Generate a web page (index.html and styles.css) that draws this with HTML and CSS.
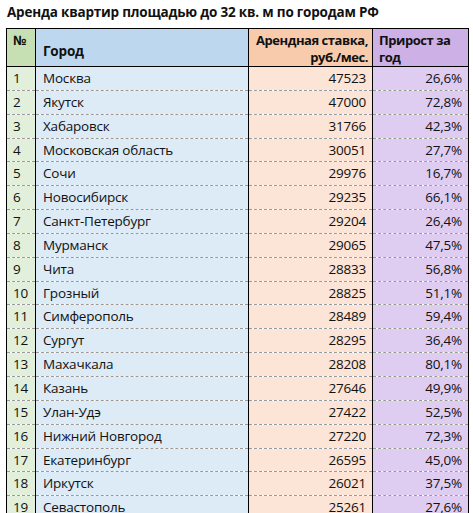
FILE: index.html
```html
<!DOCTYPE html>
<html lang="ru">
<head>
<meta charset="utf-8">
<link rel="stylesheet" href="styles.css">
</head>
<body>
<h1 class="title">Аренда квартир площадью до 32 кв. м по городам РФ</h1>
<table class="rent">
<thead>
<tr>
<th class="c-num">№</th>
<th class="c-city">Город</th>
<th class="c-rent">Арендная ставка,<br>руб./мес.</th>
<th class="c-grow">Прирост за<br>год</th>
</tr>
</thead>
<tbody>
<tr><td class="c-num">1</td><td class="c-city">Москва</td><td class="c-rent">47523</td><td class="c-grow">26,6%</td></tr>
<tr><td class="c-num">2</td><td class="c-city">Якутск</td><td class="c-rent">47000</td><td class="c-grow">72,8%</td></tr>
<tr><td class="c-num">3</td><td class="c-city">Хабаровск</td><td class="c-rent">31766</td><td class="c-grow">42,3%</td></tr>
<tr><td class="c-num">4</td><td class="c-city">Московская область</td><td class="c-rent">30051</td><td class="c-grow">27,7%</td></tr>
<tr><td class="c-num">5</td><td class="c-city">Сочи</td><td class="c-rent">29976</td><td class="c-grow">16,7%</td></tr>
<tr><td class="c-num">6</td><td class="c-city">Новосибирск</td><td class="c-rent">29235</td><td class="c-grow">66,1%</td></tr>
<tr><td class="c-num">7</td><td class="c-city">Санкт-Петербург</td><td class="c-rent">29204</td><td class="c-grow">26,4%</td></tr>
<tr><td class="c-num">8</td><td class="c-city">Мурманск</td><td class="c-rent">29065</td><td class="c-grow">47,5%</td></tr>
<tr><td class="c-num">9</td><td class="c-city">Чита</td><td class="c-rent">28833</td><td class="c-grow">56,8%</td></tr>
<tr><td class="c-num">10</td><td class="c-city">Грозный</td><td class="c-rent">28825</td><td class="c-grow">51,1%</td></tr>
<tr><td class="c-num">11</td><td class="c-city">Симферополь</td><td class="c-rent">28489</td><td class="c-grow">59,4%</td></tr>
<tr><td class="c-num">12</td><td class="c-city">Сургут</td><td class="c-rent">28295</td><td class="c-grow">36,4%</td></tr>
<tr><td class="c-num">13</td><td class="c-city">Махачкала</td><td class="c-rent">28208</td><td class="c-grow">80,1%</td></tr>
<tr><td class="c-num">14</td><td class="c-city">Казань</td><td class="c-rent">27646</td><td class="c-grow">49,9%</td></tr>
<tr><td class="c-num">15</td><td class="c-city">Улан-Удэ</td><td class="c-rent">27422</td><td class="c-grow">52,5%</td></tr>
<tr><td class="c-num">16</td><td class="c-city">Нижний Новгород</td><td class="c-rent">27220</td><td class="c-grow">72,3%</td></tr>
<tr><td class="c-num">17</td><td class="c-city">Екатеринбург</td><td class="c-rent">26595</td><td class="c-grow">45,0%</td></tr>
<tr><td class="c-num">18</td><td class="c-city">Иркутск</td><td class="c-rent">26021</td><td class="c-grow">37,5%</td></tr>
<tr><td class="c-num">19</td><td class="c-city">Севастополь</td><td class="c-rent">25261</td><td class="c-grow">27,6%</td></tr>
</tbody>
</table>
</body>
</html>
```
FILE: styles.css
```css
html, body {
  margin: 0;
  padding: 0;
  background: #ffffff;
  overflow: hidden;
}
body {
  font-family: "Open Sans", "Noto Sans", sans-serif;
  color: #111111;
}
.title {
  margin: 0;
  padding: 3px 0 0 7px;
  height: 28px;
  box-sizing: border-box;
  font-size: 13.5px;
  font-weight: 700;
  line-height: 18px;
  letter-spacing: -0.2px;
}
.rent {
  margin-left: 6px;
  border-collapse: collapse;
  table-layout: fixed;
  width: 462px;
  font-size: 13.5px;
  letter-spacing: -0.2px;
}
.rent th, .rent td {
  border-left: 1px solid #000;
  border-right: 1px solid #000;
  padding: 0 6px;
  white-space: nowrap;
  overflow: hidden;
}
.rent th {
  height: 35px;
  border-top: 1px solid #000;
  border-bottom: 1px solid #000;
  font-weight: 700;
  font-size: 13px;
  letter-spacing: -0.45px;
  line-height: 17px;
  vertical-align: top;
  padding-top: 3px;
  box-sizing: border-box;
  text-align: left;
}
.rent td {
  height: 23.85px;
  box-sizing: border-box;
  border-top: 1px dashed #9a9a9a;
  line-height: 18px;
  padding-top: 2px;
  vertical-align: top;
}
.rent tbody tr:first-child td { border-top: none; }
.rent .c-num { width: 29px; }
.rent .c-city { width: 213px; padding-left: 7px; }
.rent .c-rent { width: 124px; text-align: right; }
.rent .c-grow { width: 96px; text-align: right; }
.rent th.c-city { vertical-align: bottom; padding-bottom: 6px; font-size: 13.5px; letter-spacing: -0.2px; }
.rent th.c-rent { text-align: right; padding-right: 4px; padding-left: 2px; }
.rent th.c-grow { text-align: left; }
th.c-num { background: #c6e0b4; }
th.c-city { background: #bdd7ee; }
th.c-rent { background: #f8cbad; }
th.c-grow { background: #ccb0e6; }
td.c-num { background: #e2efda; }
td.c-city { background: #ddebf7; }
td.c-rent { background: #fce4d6; }
td.c-grow { background: #dfcdf1; }
```
